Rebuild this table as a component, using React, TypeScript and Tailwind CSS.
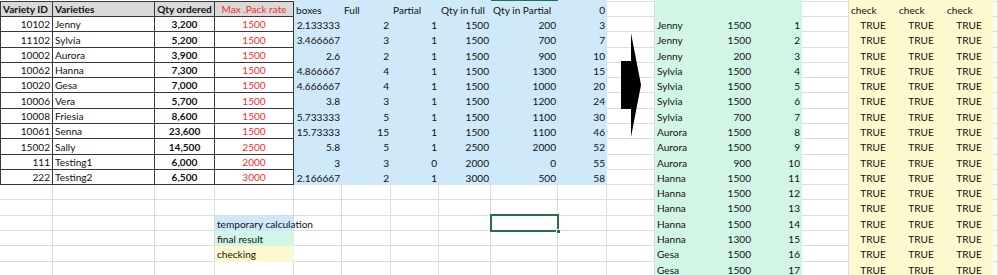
import React from "react";

type V = "hdr" | "ltd" | "blue" | "green" | "yellow" | "white" | "top";
type C = { t?: string; v: V; a?: "l" | "r" | "c"; b?: boolean; red?: boolean; first?: boolean; sel?: boolean };

const vCls: Record<V, string> = {
  hdr: "bg-[#d9d9d9] border-r border-b border-[#383838]",
  ltd: "bg-white border-r border-b border-[#383838]",
  blue: "bg-[#cde9fa]",
  green: "bg-[#d1f6e6]",
  yellow: "bg-[#fdf9ce]",
  white: "border-r border-b border-[#dcdcdc]",
  top: "border-b border-[#383838]",
};
const aCls = { l: "justify-start pl-[2px]", r: "justify-end pr-[2px]", c: "justify-center" };

const left: [string, string, string, string][] = [
  ["10102", "Jenny", "3,200", "1500"],
  ["11102", "Sylvia", "5,200", "1500"],
  ["10002", "Aurora", "3,900", "1500"],
  ["10062", "Hanna", "7,300", "1500"],
  ["10020", "Gesa", "7,000", "1500"],
  ["10006", "Vera", "5,700", "1500"],
  ["10008", "Friesia", "8,600", "1500"],
  ["10061", "Senna", "23,600", "1500"],
  ["15002", "Sally", "14,500", "2500"],
  ["111", "Testing1", "6,000", "2000"],
  ["222", "Testing2", "6,500", "3000"],
];
const calc: string[][] = [
  ["2.133333", "2", "1", "1500", "200", "3"],
  ["3.466667", "3", "1", "1500", "700", "7"],
  ["2.6", "2", "1", "1500", "900", "10"],
  ["4.866667", "4", "1", "1500", "1300", "15"],
  ["4.666667", "4", "1", "1500", "1000", "20"],
  ["3.8", "3", "1", "1500", "1200", "24"],
  ["5.733333", "5", "1", "1500", "1100", "30"],
  ["15.73333", "15", "1", "1500", "1100", "46"],
  ["5.8", "5", "1", "2500", "2000", "52"],
  ["3", "3", "0", "2000", "0", "55"],
  ["2.166667", "2", "1", "3000", "500", "58"],
];
const result: [string, string][] = [
  ["Jenny", "1500"], ["Jenny", "1500"], ["Jenny", "200"],
  ["Sylvia", "1500"], ["Sylvia", "1500"], ["Sylvia", "1500"], ["Sylvia", "700"],
  ["Aurora", "1500"], ["Aurora", "1500"], ["Aurora", "900"],
  ["Hanna", "1500"], ["Hanna", "1500"], ["Hanna", "1500"], ["Hanna", "1500"], ["Hanna", "1300"],
  ["Gesa", "1500"], ["Gesa", "1500"],
];

function buildRows(): C[][] {
  const rows: C[][] = [];
  const r0: C[] = [];
  for (let i = 0; i < 4; i++) r0.push({ v: "top" });
  for (let i = 4; i < 10; i++) r0.push({ v: "blue", sel: i === 8 });
  r0.push({ v: "white" });
  for (let i = 0; i < 3; i++) r0.push({ v: "green" });
  r0.push({ v: "white" });
  for (let i = 0; i < 3; i++) r0.push({ v: "yellow" });
  r0.push({ v: "white" });
  rows.push(r0);
  rows.push([
    { t: "Variety ID", v: "hdr", a: "l", b: true, first: true },
    { t: "Varieties", v: "hdr", a: "l", b: true },
    { t: "Qty ordered", v: "hdr", a: "c", b: true },
    { t: "Max .Pack rate", v: "hdr", a: "c", red: true },
    { t: "boxes", v: "blue", a: "l" },
    { t: "Full", v: "blue", a: "l" },
    { t: "Partial", v: "blue", a: "l" },
    { t: "Qty in full", v: "blue", a: "l" },
    { t: "Qty in Partial", v: "blue", a: "l" },
    { t: "0", v: "blue", a: "r" },
    { v: "white" },
    { v: "green" }, { v: "green" }, { v: "green" },
    { v: "white" },
    { t: "check", v: "yellow", a: "l" }, { t: "check", v: "yellow", a: "l" }, { t: "check", v: "yellow", a: "l" },
    { v: "white" },
  ]);
  for (let r = 0; r < 17; r++) {
    const row: C[] = [];
    if (r < 11) {
      const [id, name, qty, rate] = left[r];
      row.push({ t: id, v: "ltd", a: "r", first: true });
      row.push({ t: name, v: "ltd", a: "l" });
      row.push({ t: qty, v: "ltd", a: "c", b: true });
      row.push({ t: rate, v: "ltd", a: "c", red: true });
      calc[r].forEach((x) => row.push({ t: x, v: "blue", a: "r" }));
    } else {
      row.push({ v: "white" }, { v: "white" }, { v: "white" });
      if (r === 13) row.push({ t: "temporary calculation", v: "blue", a: "l" });
      else if (r === 14) row.push({ t: "final result", v: "green", a: "l" });
      else if (r === 15) row.push({ t: "checking", v: "yellow", a: "l" });
      else row.push({ v: "white" });
      for (let i = 0; i < 6; i++) row.push({ v: "white" });
    }
    row.push({ v: "white" });
    const [n, q] = result[r];
    row.push({ t: n, v: "green", a: "l" }, { t: q, v: "green", a: "r" }, { t: String(r + 1), v: "green", a: "r" });
    row.push({ v: "white" });
    row.push({ t: "TRUE", v: "yellow", a: "c" }, { t: "TRUE", v: "yellow", a: "c" }, { t: "TRUE", v: "yellow", a: "c" });
    row.push({ v: "white" });
    rows.push(row);
  }
  return rows;
}

export default function App() {
  const rows = buildRows();
  return (
    <div className="relative w-[998px] h-[275px] overflow-hidden bg-white" style={{ fontFamily: "Lato, 'Open Sans', sans-serif" }}>
      <div className="grid grid-cols-[53px_102px_60px_79px_48px_49px_48px_52px_67px_49px_48px_49px_49px_49px_47px_48px_48px_48px_5px] grid-rows-[2px_15px_15px_16px_15px_15px_15px_16px_15px_15px_16px_15px_15px_15px_16px_15px_15px_16px_15px] text-[10.1px] text-[#111]">
        {rows.map((row, ri) =>
          row.map((c, ci) => (
            <div
              key={ri + "-" + ci}
              className={
                "flex items-center pt-[1px] whitespace-nowrap overflow-visible leading-none " +
                vCls[c.v] +
                " " +
                (c.a ? aCls[c.a] : "") +
                (c.b ? " font-bold" : "") +
                (c.red ? " text-[#ff2b2b]" : "") +
                (c.first ? " border-l" : "") +
                (c.sel ? " border-t border-[#217346]" : "")
              }
            >
              {c.t}
            </div>
          ))
        )}
      </div>
      <svg className="absolute left-0 top-0 pointer-events-none" width="998" height="275" viewBox="0 0 998 275">
        <polygon points="621,61 631,61 631,33 641,85 631,137 631,109 621,109" fill="#000" />
      </svg>
      <div className="absolute left-[490px] top-[214px] w-[69px] h-[18px] border-2 border-[#217346]" />
      <div className="absolute left-[556px] top-[229px] w-[5px] h-[5px] bg-[#217346] border border-white" />
    </div>
  );
}
